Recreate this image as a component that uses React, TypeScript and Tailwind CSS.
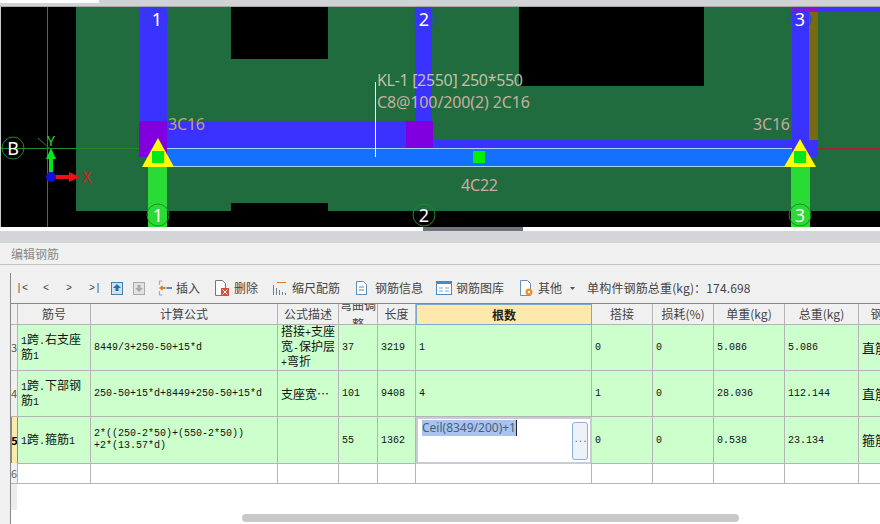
import type { ReactNode } from 'react';

const cjk = '"Noto Sans CJK SC"';
const mono = `font-['Liberation_Mono','Noto_Sans_CJK_SC',monospace]`;

const headers = ['筋号', '计算公式', '公式描述', '弯曲调整', '长度', '根数', '搭接', '损耗(%)', '单重(kg)', '总重(kg)', '钢筋'];

const rows = [
  { n: '3', name: '1跨.右支座筋1', formula: '8449/3+250-50+15*d', desc: '搭接+支座\n宽-保护层\n+弯折', bend: '37', len: '3219', count: '1', lap: '0', loss: '0', unit: '5.086', total: '5.086', type: '直筋' },
  { n: '4', name: '1跨.下部钢筋1', formula: '250-50+15*d+8449+250-50+15*d', desc: '支座宽…', bend: '101', len: '9408', count: '4', lap: '1', loss: '0', unit: '28.036', total: '112.144', type: '直筋' },
  { n: '5', name: '1跨.箍筋1', formula: '2*((250-2*50)+(550-2*50))\n+2*(13.57*d)', desc: '', bend: '55', len: '1362', count: '', lap: '0', loss: '0', unit: '0.538', total: '23.134', type: '箍筋' },
];

const cell = 'border-r border-b border-[#b4b4b4] flex items-center overflow-hidden';

// ascii runs are narrower than the cjk ones in the grid
function Mixed({ text }: { text: string }) {
  return (
    <div>
      {text.split(/([\x00-\x7f]+)/).map((part, i) =>
        i % 2 === 1 ? (
          <span key={i} className={`${mono} text-[10px]`}>{part}</span>
        ) : (
          part
        ),
      )}
    </div>
  );
}

function Cad() {
  const labels = [
    { x: 157, y: 19, t: '1', c: '#2a46c8' }, { x: 424, y: 19, t: '2', c: '#2a46c8' }, { x: 800, y: 19, t: '3', c: '#2a46c8' },
    { x: 158, y: 215, t: '1', c: '#1f8a2c' }, { x: 424, y: 215, t: '2', c: '#1f8a2c' }, { x: 800, y: 215, t: '3', c: '#1f8a2c' },
    { x: 13, y: 148, t: 'B', c: '#1f8a2c' },
  ];
  const textFont = { fontFamily: '"Noto Sans", sans-serif' };
  return (
    <svg width="880" height="220" viewBox="0 7 880 220" className="block shrink-0">
      <rect x="0" y="7" width="880" height="220" fill="#000" />
      <rect x="0" y="7" width="1" height="220" fill="#c8cace" />
      <rect x="76" y="7" width="804" height="204" fill="#206c3f" />
      <rect x="231" y="7" width="97" height="52" fill="#000" />
      <rect x="231" y="203" width="97" height="8" fill="#000" />
      <rect x="519" y="7" width="185" height="79" fill="#000" />
      <line x1="47.5" y1="7" x2="47.5" y2="227" stroke="#1f8a2c" />
      <line x1="1" y1="148.5" x2="140" y2="148.5" stroke="#1f8a2c" />
      {/* columns and beams */}
      <rect x="140" y="7" width="27" height="114" fill="#3a32ff" />
      <rect x="415" y="7" width="17" height="114" fill="#3a32ff" />
      <rect x="167" y="121" width="248" height="27" fill="#3a32ff" />
      <rect x="432" y="140" width="386" height="8" fill="#3a32ff" />
      <rect x="792" y="7" width="17" height="150" fill="#3a32ff" />
      <rect x="809" y="140" width="9" height="17" fill="#3a32ff" />
      <rect x="809" y="12" width="9" height="128" fill="#776a10" />
      <rect x="792" y="7" width="26" height="5" fill="#8c10d8" />
      <rect x="818" y="7" width="62" height="5" fill="#3a32ff" />
      <rect x="139" y="121" width="28" height="36" fill="#8000e0" />
      <rect x="406" y="121" width="27" height="36" fill="#8000e0" />
      <rect x="148" y="166" width="19" height="61" fill="#2adb35" />
      <rect x="791" y="166" width="19" height="61" fill="#2adb35" />
      <rect x="167" y="148" width="625" height="18" fill="#1470ff" />
      <line x1="167" y1="148.5" x2="792" y2="148.5" stroke="#a8d4ff" />
      <line x1="167" y1="166.5" x2="792" y2="166.5" stroke="#a8d4ff" />
      <line x1="818" y1="148.5" x2="880" y2="148.5" stroke="#a02525" />
      <line x1="375.5" y1="82" x2="375.5" y2="157" stroke="#fff" />
      {/* supports */}
      <polygon points="158,138 174,167 142,167" fill="#ffff00" />
      <polygon points="800,139 816,167 784,167" fill="#ffff00" />
      <rect x="152" y="151" width="12" height="12" fill="#00e81a" />
      <rect x="794" y="151" width="12" height="12" fill="#00e81a" />
      <rect x="473" y="151" width="12" height="12" fill="#00f000" />
      {/* axis marks */}
      {labels.map((l) => (
        <g key={`${l.x}-${l.y}`}>
          <circle cx={l.x} cy={l.y} r="11" fill="none" stroke={l.c} />
          <text x={l.x} y={l.y + 7} fill="#fff" fontSize="18" textAnchor="middle" style={textFont}>{l.t}</text>
        </g>
      ))}
      {/* ucs */}
      <line x1="38" y1="138" x2="51" y2="150" stroke="#1f8a2c" />
      <rect x="49" y="158" width="4" height="16" fill="#00e81a" />
      <polygon points="51,148 56,159 46,159" fill="#00e81a" />
      <rect x="54" y="175" width="16" height="4" fill="#f01010" />
      <polygon points="80,177 69,172 69,182" fill="#f01010" />
      <circle cx="51" cy="177" r="5" fill="#1010d8" />
      <text x="51" y="146" fill="#20e030" fontSize="14" textAnchor="middle" style={textFont}>Y</text>
      <text x="87" y="183" fill="#d02020" fontSize="16" textAnchor="middle" style={textFont}>X</text>
      {/* rebar notes */}
      <g fontSize="16" style={textFont}>
        <text x="377" y="86" fill="#c4bfa8" textLength="146">KL-1 [2550] 250*550</text>
        <text x="377" y="108" fill="#c4b0a0" textLength="153">C8@100/200(2) 2C16</text>
        <text x="168" y="130" fill="#b8a868" textLength="37">3C16</text>
        <text x="753" y="130" fill="#c4a8a0" textLength="37">3C16</text>
        <text x="461" y="191" fill="#d0a8a8" textLength="37">4C22</text>
      </g>
    </svg>
  );
}

function Tool({ icon, label, className }: { icon: ReactNode; label: string; className: string }) {
  return (
    <div className={`flex items-center shrink-0 gap-1 ${className}`}>
      {icon}
      <span>{label}</span>
    </div>
  );
}

function DocIcon({ badge }: { badge?: string }) {
  return (
    <svg width="17" height="18" viewBox="0 0 17 18">
      <path d="M2.5 1.5h7l3 3v12h-10z" fill="#fff" stroke="#777" />
      {badge && <rect x="8" y="9" width="8" height="8" fill={badge} />}
      {badge === '#d84a3a' && <path d="M9.5 10.5l5 5m0-5l-5 5" stroke="#fff" />}
    </svg>
  );
}

function Toolbar() {
  return (
    <div className="h-[30px] flex items-center text-[12px] text-[#444] whitespace-nowrap">
      <span className={`${mono} text-[10px] ml-[5px] w-[12px]`}>|&lt;</span>
      <span className={`${mono} text-[10px] ml-[15px] w-[8px]`}>&lt;</span>
      <span className={`${mono} text-[10px] ml-[15px] w-[8px]`}>&gt;</span>
      <span className={`${mono} text-[10px] ml-[15px] w-[12px]`}>&gt;|</span>
      <svg width="12" height="13" viewBox="0 0 12 13" className="ml-[10px] shrink-0">
        <rect x="0.5" y="0.5" width="11" height="12" fill="#cfe3f5" stroke="#4a7ea8" />
        <path d="M6 2l4 4H7.5v3h-3V6H2z" fill="#1f6fb5" />
      </svg>
      <svg width="12" height="13" viewBox="0 0 12 13" className="ml-[10px] shrink-0">
        <rect x="0.5" y="0.5" width="11" height="12" fill="#e2e2e2" stroke="#aaa" />
        <path d="M6 10L2 6h2.500V3h3v3H10z" fill="#a8a8a8" />
      </svg>
      <Tool
        className="ml-[13px]"
        label="插入"
        icon={
          <svg width="14" height="18" viewBox="0 0 15 18">
            <path d="M4.500 1.500H1.500v4M1.500 12.500v4h3" fill="none" stroke="#999" />
            <path d="M1 9l4-3v2h3v2H5v2z" fill="#e07a20" />
            <rect x="9" y="8" width="6" height="2" fill="#3a8fd8" />
          </svg>
        }
      />
      <Tool className="ml-[13px]" label="删除" icon={<DocIcon badge="#d84a3a" />} />
      <Tool
        className="ml-[14px]"
        label="缩尺配筋"
        icon={
          <svg width="16" height="16" viewBox="0 0 16 16">
            <path d="M1.500 5v10M4.500 8v7M7.500 10v5M10.500 12v3M13.500 13v2" stroke="#6a7f96" />
            <path d="M5 2.500h9" stroke="#e07a20" />
          </svg>
        }
      />
      <Tool
        className="ml-[15px]"
        label="钢筋信息"
        icon={
          <svg width="14" height="16" viewBox="0 0 14 16" className="mr-[2px]">
            <path d="M1.500 1.500h7l3 3v10h-10z" fill="#fff" stroke="#5a8cc0" />
            <path d="M4 7h5M4 10h5" stroke="#5a8cc0" />
          </svg>
        }
      />
      <Tool
        className="ml-[13px]"
        label="钢筋图库"
        icon={
          <svg width="16" height="14" viewBox="0 0 16 14">
            <rect x="0.500" y="0.500" width="15" height="13" fill="#fff" stroke="#4a88c0" />
            <rect x="1" y="1" width="14" height="2" fill="#4a88c0" />
            <path d="M3 7h4M3 10h4M9 7h4M9 10h4" stroke="#7aa8d0" />
          </svg>
        }
      />
      <Tool
        className="ml-[15px]"
        label="其他"
        icon={
          <svg width="15" height="18" viewBox="0 0 15 18">
            <path d="M1.500 1.500h7l3 3v12h-10z" fill="#fff" stroke="#6a8fb5" />
            <circle cx="10" cy="13" r="3.500" fill="#f0902a" />
            <circle cx="10" cy="13" r="1.200" fill="#fff" />
          </svg>
        }
      />
      <svg width="5" height="3" viewBox="0 0 5 3" className="ml-[8px] shrink-0">
        <path d="M0 0h5L2.500 3z" fill="#555" />
      </svg>
      <span className="ml-[12px] tracking-[0.15px]">单构件钢筋总重(kg)：174.698</span>
    </div>
  );
}

function Table() {
  const grid = 'grid grid-cols-[7px_73px_187px_61px_39px_38px_176px_61px_61px_71px_74px_48px]';
  return (
    <div className="w-[869px] overflow-hidden bg-white">
      <div className={`${grid} h-[22px] border-t border-[#888] bg-[#f0f0f0] text-[12px] text-[#444]`}>
        <div className={cell} />
        {headers.map((h) =>
          h === '根数' ? (
            <div key={h} className="bg-[#fde8ad] border border-[#7fa8d0] flex items-center justify-center font-bold text-[#222]">{h}</div>
          ) : h === '弯曲调整' ? (
            <div key={h} className={`${cell} justify-center text-center leading-[19px]`}>{h}</div>
          ) : (
            <div key={h} className={`${cell} justify-center whitespace-nowrap`}>{h}</div>
          ),
        )}
      </div>
      {rows.map((r) => {
        const num = `${cell} bg-[#ccffcc] ${mono} text-[10px] text-[#111] pl-[3px] whitespace-nowrap`;
        const active = r.n === '5';
        return (
          <div key={r.n} className={`${grid} h-[46px]`}>
            <div className={`${cell} justify-center text-[11px] ${active ? 'font-bold text-black bg-[#fde8ad] border-l border-l-[#5f94cc] border-r-[#5f94cc]' : 'text-[#555] bg-[#f0f0f0]'}`}>{r.n}</div>
            <div className={`${cell} bg-[#ccffcc] text-[12px] leading-[12px] text-[#111] pl-[3px]`}>
              <Mixed text={r.name} />
            </div>
            <div className={`${num} whitespace-pre-line leading-[12px]`}>{r.formula}</div>
            <div className={`${cell} bg-[#ccffcc] text-[12px] leading-[12px] text-[#111] pl-[3px] whitespace-pre-line`}>
              <Mixed text={r.desc} />
            </div>
            <div className={num}>{r.bend}</div>
            <div className={num}>{r.len}</div>
            {active ? (
              <div className="border-2 border-[#c8ccd4] bg-white flex pl-[4px] pt-[1px] pr-[2px] pb-[2px] justify-between text-[12px] text-[#4a6078]">
                <div className="self-start flex h-[16px] items-center">
                  <span className="bg-[#a8c4ee] h-[16px] leading-[16px] font-['Noto_Sans']">Ceil(8349/200)+1</span>
                  <span className="w-px h-[16px] bg-[#223]" />
                </div>
                <div className={`w-[16px] mt-[2px] h-[38px] rounded-[3px] border border-[#8eb0d4] bg-[#edf2f8] flex items-center justify-center text-[#667] text-[9px] tracking-[-1px] ${mono}`}>...</div>
              </div>
            ) : (
              <div className={num}>{r.count}</div>
            )}
            <div className={num}>{r.lap}</div>
            <div className={num}>{r.loss}</div>
            <div className={num}>{r.unit}</div>
            <div className={num}>{r.total}</div>
            <div className={`${cell} bg-[#ccffcc] text-[13px] text-[#111] pl-[3px] whitespace-nowrap`}>{r.type}</div>
          </div>
        );
      })}
      <div className={`${grid} h-[21px]`}>
        <div className={`${cell} justify-center bg-[#f0f0f0] text-[11px] text-[#666]`}>6</div>
        {headers.map((h) => (
          <div key={h} className={cell} />
        ))}
      </div>
    </div>
  );
}

export default function App() {
  return (
    <div
      className="w-[880px] h-[524px] overflow-hidden flex flex-col bg-[#f0f0f0]"
      style={{ fontFamily: `${cjk}, "Noto Sans", sans-serif` }}
    >
      <div className="h-[7px] bg-[#d0d2d6] border-b border-[#a8a8a8] shrink-0">
        <div className="w-[99px] h-[3px] bg-white" />
      </div>
      <Cad />
      <div className="h-[4px] bg-white shrink-0">
        <div className="w-[100px] h-[4px] bg-[#70747c] ml-[423px]" />
      </div>
      <div className="h-[12px] bg-[#d4d5d9] shrink-0" />
      <div className="h-[22px] shrink-0 border-b border-[#c4c4c4] flex items-center pl-[11px] text-[12px] text-[#888]">编辑钢筋</div>
      <div className="mt-[8px] ml-[10px] flex-1 border-l border-[#888] flex flex-col min-h-0">
        <Toolbar />
        <Table />
        <div className="flex-1 bg-white relative">
          <div className="absolute left-0 top-0 w-[6px] h-[26px] bg-[#ececec]" />
          <div className="absolute left-[231px] top-[30px] w-[497px] h-[8px] rounded-full bg-[#c8c8c8]" />
        </div>
      </div>
    </div>
  );
}
